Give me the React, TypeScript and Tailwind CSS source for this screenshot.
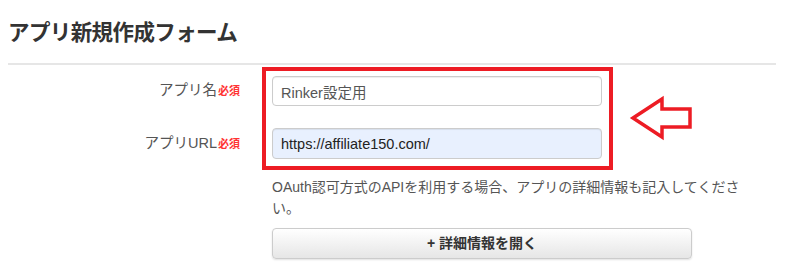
export default function App() {
  return (
    <div className="relative h-[277px] w-[800px] overflow-hidden bg-white font-['Liberation_Sans','Noto_Sans_CJK_JP',sans-serif] text-[#333]">
      <div className="pl-2 pr-6">
        <h1 className="pt-[21px] text-[21.5px] font-bold leading-[24px] tracking-[-0.6px] text-[#333]">
          アプリ新規作成フォーム
        </h1>
        <div className="mt-[18px] border-t-2 border-[#e6e6e6]" />

        {/* App name */}
        <FormRow label="アプリ名" className="mt-[11px]">
          <input
            readOnly
            value="Rinker設定用"
            className="h-[30px] w-[330px] rounded-[4px] border border-[#ccc] bg-white px-[8px] text-[14.5px] text-[#555] shadow-[inset_0_1px_1px_rgba(0,0,0,0.075)] outline-none"
          />
        </FormRow>

        {/* App URL */}
        <FormRow label="アプリURL" className="mt-[22px]">
          <input
            readOnly
            value="https://affiliate150.com/"
            className="h-[31px] w-[330px] rounded-[4px] border border-[#ccc] bg-[#e8f0fe] px-[8px] text-[14.5px] text-[#222] shadow-[inset_0_1px_1px_rgba(0,0,0,0.075)] outline-none"
          />
        </FormRow>

        <div className="ml-[264px] mt-[18px] w-[476px]">
          <p className="text-[14px] leading-[21px] text-[#555]">
            OAuth認可方式のAPIを利用する場合、アプリの詳細情報も記入してください。
          </p>
          <button className="mt-[9px] flex h-[31px] w-[420px] items-center justify-center rounded-[4px] border border-[#ccc] bg-gradient-to-b from-white to-[#e6e6e6] text-[14px] font-bold text-[#333] shadow-[0_1px_2px_rgba(0,0,0,0.12)]">
            + 詳細情報を開く
          </button>
        </div>
      </div>

      {/* annotation box */}
      <div className="absolute left-[262px] top-[67px] h-[103px] w-[351px] border-[4px] border-[#ed1c24]" />

      {/* annotation arrow */}
      <svg className="absolute left-0 top-0" width="800" height="277" viewBox="0 0 800 277" fill="none">
        <polygon
          points="633,118 662,99 662,109 690,109 690,127 662,127 662,137"
          stroke="#ed1c24"
          strokeWidth="3.5"
          strokeLinejoin="miter"
        />
      </svg>
    </div>
  );
}

function FormRow({ label, className, children }: { label: string; className?: string; children: React.ReactNode }) {
  return (
    <div className={`flex items-center ${className ?? ""}`}>
      <div className="flex w-[232px] items-baseline justify-end">
        <span className="text-[14.5px] text-[#555]">{label}</span>
        <span className="ml-[1px] text-[11px] font-bold text-[#f33]">必須</span>
      </div>
      <div className="ml-[32px]">{children}</div>
    </div>
  );
}
